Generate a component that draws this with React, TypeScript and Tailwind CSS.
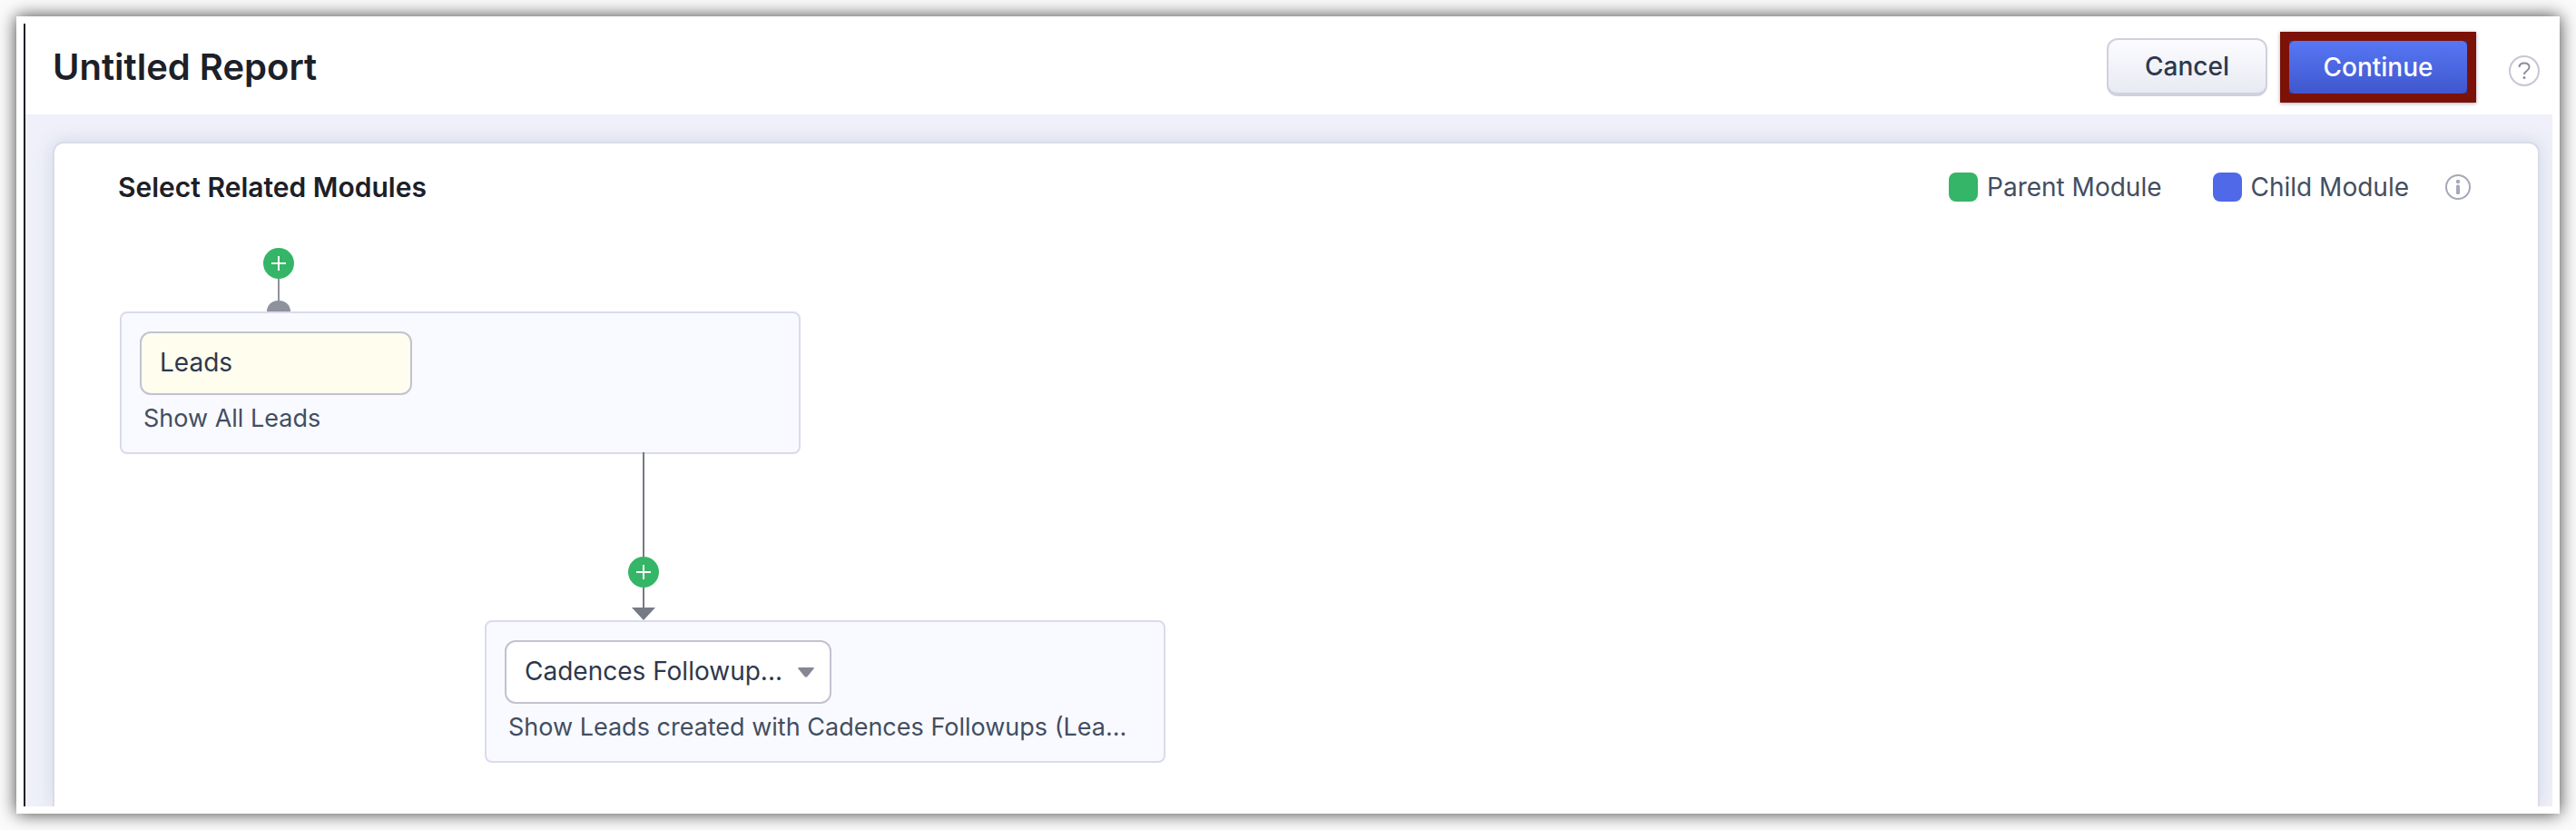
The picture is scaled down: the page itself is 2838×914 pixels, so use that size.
import React, { useState } from 'react';

const PlusButton: React.FC<{ label: string }> = ({ label }) => (
  <button type="button" aria-label={label} className="block h-[34px] w-[34px] rounded-full bg-[#35b567]">
    <svg viewBox="0 0 34 34" className="h-full w-full" fill="none" stroke="#fff" strokeWidth="2">
      <path d="M17 9v16M9 17h16" />
    </svg>
  </button>
);

interface LegendItemProps {
  color: string;
  label: string;
}

const LegendItem: React.FC<LegendItemProps> = ({ color, label }) => (
  <div className="flex items-center gap-[10px]">
    <span className={`h-8 w-8 rounded-lg ${color}`} />
    <span>{label}</span>
  </div>
);

const moduleCardClass = "h-[157px] w-[750px] rounded-lg border-2 border-[#dbdaec] bg-[#f9faff] px-5 pt-5";
const fieldClass = "block h-[70px] rounded-xl border-2 border-[#c2c2d0] pb-[2px] pl-5 text-[28px] text-[#2e384d] outline-none";
const descriptionClass = "truncate pt-2 pl-1 text-[27px] leading-9 text-[#434e61]";

const Header: React.FC = () => (
  <header className="flex h-[100px] items-center justify-between bg-white pr-[14px] pb-1 pl-[30px]">
    <h1 className="text-[40px] leading-[48px] font-semibold text-[#1c2028]">Untitled Report</h1>
    <div className="flex items-center text-[28px]">
      <button
        type="button"
        className="h-16 w-[177px] rounded-xl border-2 border-b-4 border-[#cfd1dc] bg-linear-to-b from-[#fcfcff] to-[#e8eaf3] font-medium text-[#2e384d]"
      >
        Cancel
      </button>
      {/* Highlighted call to action */}
      <div className="ml-[14px] border-10 border-[#7c1108] bg-[#2c3a86] shadow-[0_1px_4px_rgba(40,40,90,0.4)]">
        <button
          type="button"
          className="block h-[58px] w-[196px] rounded-md bg-linear-to-b from-[#5877f5] to-[#3f57cd] font-medium text-white"
        >
          Continue
        </button>
      </div>
      <button type="button" aria-label="Help" className="mt-2 ml-9 h-[34px] w-[34px]">
        <svg viewBox="0 0 34 34" className="h-full w-full" fill="none">
          <circle cx="17" cy="17" r="16" stroke="#c5c7d3" strokeWidth="2" />
          <path d="M11.500 13c0-3 2-4.500 5.500-4.500s5.500 2 5.500 4.500c0 4-5.500 4-5.500 8" stroke="#8b8f9c" strokeWidth="2" />
          <circle cx="17" cy="24.500" r="1.500" fill="#8b8f9c" />
        </svg>
      </button>
    </div>
  </header>
);

const ModuleTree: React.FC = () => {
  const [childModule, setChildModule] = useState('cadences');

  return (
    <div className="pl-[72px]">
      <div className="ml-[158px] flex w-[34px] flex-col items-center">
        <PlusButton label="Add parent module" />
        <div className="h-6 w-[2px] bg-[#8e929c]" />
        <div className="h-3 w-[26px] rounded-t-full bg-[#8e929c]" />
      </div>
      <section className={moduleCardClass}>
        <input aria-label="Parent module" readOnly value="Leads" className={`${fieldClass} w-[300px] bg-[#fffdee]`} />
        <p className={descriptionClass}>Show All Leads</p>
      </section>

      <div className="-mt-[2px] ml-[560px] flex w-[34px] flex-col items-center">
        <div className="h-[115px] w-[2px] bg-[#767a84]" />
        <PlusButton label="Add child module" />
        <div className="h-[22px] w-[2px] bg-[#767a84]" />
        <svg viewBox="0 0 26 14" className="h-[14px] w-[26px]">
          <path d="M0 0h26L13 14z" fill="#767a84" />
        </svg>
      </div>
      <section className={`${moduleCardClass} ml-[402px]`}>
        <div className="relative w-[360px]">
          <select
            aria-label="Child module"
            value={childModule}
            onChange={e => setChildModule(e.target.value)}
            className={`${fieldClass} w-full appearance-none bg-white`}
          >
            <option value="cadences">Cadences Followup...</option>
          </select>
          <svg viewBox="0 0 18 11" className="pointer-events-none absolute top-[30px] right-[19px] h-[11px] w-[18px]">
            <path d="M1 0h16q1 0 .500 1.500L10.500 10q-1.500 1.500-3 0L.500 1.500Q0 0 1 0z" fill="#858892" />
          </svg>
        </div>
        <p className={descriptionClass}>Show Leads created with Cadences Followups (Lea...</p>
      </section>
    </div>
  );
};

const App: React.FC = () => (
  <div className="flex min-h-screen bg-[#fbfbfb] p-[18px] font-['Inter',sans-serif]">
    <div className="flex flex-1 bg-white p-2 shadow-[0_0_18px_rgba(0,0,0,0.75)]">
      <div className="flex flex-1 flex-col border-l-2 border-[#1c2028] bg-[#f0f0fa]">
        <Header />
        <div className="flex flex-1 flex-col overflow-hidden pt-[30px] pr-[14px] pl-[30px]">
          <main className="flex-1 rounded-t-xl border-2 border-b-0 border-[#dbdaec] bg-white shadow-[0_0_20px_rgba(200,215,225,0.9)]">
            <div className="flex items-center justify-between pt-[30px] pr-[74px] pl-[70px]">
              <h2 className="text-[30px] leading-9 font-semibold text-[#1c2028]">Select Related Modules</h2>
              <div className="flex items-center text-[28px] leading-9 text-[#434e61]">
                <LegendItem color="bg-[#35b567]" label="Parent Module" />
                <div className="ml-14">
                  <LegendItem color="bg-[#4f69e8]" label="Child Module" />
                </div>
                <button type="button" aria-label="About modules" className="ml-10 h-7 w-7">
                  <svg viewBox="0 0 28 28" className="h-full w-full" fill="none">
                    <circle cx="14" cy="14" r="13" stroke="#a5a9b8" strokeWidth="2" />
                    <circle cx="14" cy="8" r="2.200" fill="#a5a9b8" />
                    <rect x="12" y="11.500" width="4" height="10.500" rx="1.500" fill="#a5a9b8" />
                  </svg>
                </button>
              </div>
            </div>
            <div className="pt-[49px]">
              <ModuleTree />
            </div>
          </main>
        </div>
      </div>
    </div>
  </div>
);

export default App;
